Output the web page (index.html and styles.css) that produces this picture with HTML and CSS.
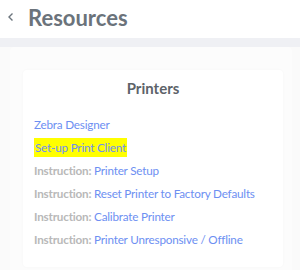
FILE: index.html
```html
<!DOCTYPE html>
<html lang="en">

<head>
    <meta charset="UTF-8">
    <meta name="viewport" content="width=device-width, initial-scale=1.0">
    <title>Resources</title>
    <link rel="stylesheet" href="styles.css">
</head>

<body>
    <header class="topbar">
        <a class="back" href="#">
            <svg width="8" height="10" viewBox="0 0 8 10"><path d="M5.5 1.5 L2 5 L5.5 8.5" fill="none" stroke="#6c757d" stroke-width="1.4"/></svg>
        </a>
        <h1>Resources</h1>
    </header>
    <div class="band"></div>
    <main class="page">
        <div class="panel">
            <section class="card">
                <h2>Printers</h2>
                <ul class="links">
                    <li><a href="#">Zebra Designer</a></li>
                    <li><mark><a href="#">Set-up Print Client</a></mark></li>
                    <li><span class="label">Instruction:</span> <a href="#">Printer Setup</a></li>
                    <li><span class="label">Instruction:</span> <a href="#">Reset Printer to Factory Defaults</a></li>
                    <li><span class="label">Instruction:</span> <a href="#">Calibrate Printer</a></li>
                    <li><span class="label">Instruction:</span> <a href="#">Printer Unresponsive / Offline</a></li>
                </ul>
            </section>
        </div>
    </main>
</body>

</html>
```

FILE: styles.css
```css
body {
    font-family: Lato, "Noto Sans", sans-serif;
    margin: 0;
    background: #fafafa;
}

.topbar {
    display: flex;
    align-items: center;
    height: 34px;
    padding: 0 0 4px 7px;
    background: #fff;
}

.back {
    display: flex;
    width: 21px;
}

.topbar h1 {
    margin: 0;
    font-size: 22px;
    font-weight: 700;
    color: #6b737b;
}

.band {
    height: 9px;
    background: #eff0f4;
}

.page {
    padding: 0 8px 0 10px;
}

.panel {
    background: #fcfcfc;
    padding: 23px 9px 6px 13px;
    border-radius: 4px;
}

.card {
    background: #fff;
    border-radius: 4px;
    padding: 9px 11px 14px 11px;
    box-shadow: 0 0 3px rgba(0, 0, 0, 0.03);
}

.card h2 {
    margin: 0 0 18px;
    text-align: center;
    font-size: 15px;
    font-weight: 700;
    color: #5d6369;
}

.links {
    list-style: none;
    margin: 0;
    padding: 0;
    font-size: 11.7px;
    letter-spacing: -0.2px;
}

.links li {
    height: 23px;
    line-height: 19px;
    white-space: nowrap;
}

.links a {
    color: #6d8ff2;
    text-decoration: none;
}

mark {
    display: inline-block;
    background: #ffff00;
    padding: 0 1px;
    line-height: 19px;
}

mark a {
    color: #7d86a8;
}

.label {
    color: #b8b8b8;
    font-weight: 700;
}
```
